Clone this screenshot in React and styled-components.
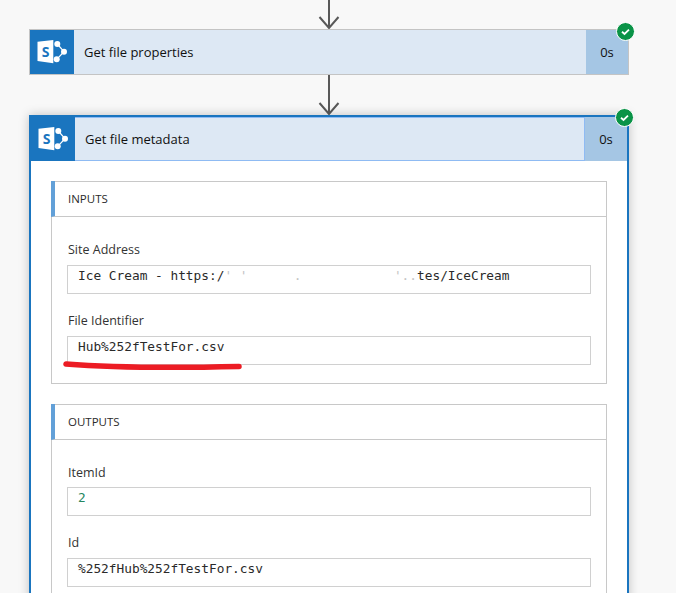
import React from "react";
import styled, { createGlobalStyle } from "styled-components";

const Global = createGlobalStyle`
  html, body {
    margin: 0;
    padding: 0;
    background: #f8f8f8;
  }
`;

const Page = styled.div`
  width: 676px;
  height: 593px;
  overflow: hidden;
  padding-left: 29px;
  box-sizing: border-box;
  font-family: "Open Sans", "Noto Sans", "Liberation Sans", sans-serif;
  color: #222;
`;

const Flow = styled.div`
  width: 600px;
`;

const Connector = styled.div`
  height: ${(p) => p.$height}px;
  display: flex;
  justify-content: center;
  svg {
    display: block;
  }
`;

const Card = styled.div`
  position: relative;
  box-sizing: border-box;
  width: 600px;
  border: ${(p) => (p.$open ? "2px solid #1a75bf" : "1px solid #c4c4c4")};
  ${(p) => p.$open && "box-shadow: 0 0 10px rgba(0, 0, 0, 0.22);"}
  background: #fff;
`;

const Header = styled.div`
  display: flex;
  height: 44px;
`;

const IconTile = styled.div`
  width: 44px;
  background: #1a75bf;
  flex: none;
  svg {
    display: block;
  }
`;

const Title = styled.div`
  flex: 1;
  display: flex;
  align-items: center;
  padding-left: 10px;
  background: #dde8f4;
  font-size: 13px;
  color: #111;
  box-sizing: border-box;
  ${(p) => p.$open && "border: solid #8fbbf3; border-width: 1px 1px 1px 0;"}
`;

const Duration = styled.div`
  width: 42px;
  flex: none;
  display: flex;
  align-items: center;
  justify-content: center;
  background: #a5c6e4;
  font-size: 13px;
  color: #111;
`;

const Badge = styled.div`
  position: absolute;
  top: ${(p) => p.$top}px;
  right: ${(p) => p.$right}px;
  width: 19px;
  height: 19px;
  svg {
    display: block;
  }
`;

const Body = styled.div`
  padding: 20px 20px 0;
  display: flex;
  flex-direction: column;
  gap: 20px;
`;

const Section = styled.section`
  border: 1px solid #c8c8c8;
  background: #fff;
`;

const SectionTitle = styled.div`
  height: 35px;
  display: flex;
  align-items: center;
  padding-left: 13px;
  border-left: 4px solid #62a0d8;
  margin-left: -1px;
  margin-top: -1px;
  border-bottom: 1px solid #c8c8c8;
  font-size: 11.5px;
  color: #2b2b2b;
`;

const SectionBody = styled.div`
  padding: 24px 15px 18px;
  display: flex;
  flex-direction: column;
  gap: 18px;
`;

const Field = styled.div`
  display: flex;
  flex-direction: column;
  gap: ${(p) => (p.$tight ? 7 : 8)}px;
`;

const Label = styled.div`
  font-size: 12.5px;
  line-height: 16px;
  padding: 1px 0 0 1px;
  margin-bottom: -1px;
  color: #333;
`;

const Value = styled.div`
  position: relative;
  box-sizing: border-box;
  height: 29px;
  border: 1px solid #d0d0d0;
  padding: 2px 10px 0;
  font-family: "DejaVu Sans Mono", "Liberation Mono", monospace;
  font-size: 12.8px;
  line-height: 15px;
  color: ${(p) => (p.$number ? "#25875f" : "#2a2a2a")};
  white-space: pre;
  background: #fff;
`;

const Residue = styled.span`
  color: #c4c4c4;
`;

const Scribble = styled.svg`
  position: absolute;
  left: -4px;
  top: 24px;
  overflow: visible;
`;

function SharePointIcon() {
  return (
    <svg width="44" height="44" viewBox="0 0 44 44">
      <path
        d="M27.3 14 L34 21.7 L26.7 29.3"
        fill="none"
        stroke="#fff"
        strokeWidth="1.2"
      />
      <circle cx="27.3" cy="14" r="3" fill="#fff" />
      <circle cx="34" cy="21.7" r="3" fill="#fff" />
      <circle cx="26.7" cy="29.3" r="3" fill="#fff" />
      <polygon points="7.5,11.7 23.3,10 23.3,33.3 7.5,31" fill="#fff" />
      <text
        x="15.5"
        y="27"
        fontSize="14"
        fontWeight="700"
        textAnchor="middle"
        fontFamily="Open Sans, sans-serif"
        fill="#1a75bf"
      >
        S
      </text>
    </svg>
  );
}

function CheckBadge() {
  return (
    <svg width="19" height="19" viewBox="0 0 19 19">
      <circle cx="9.5" cy="9.5" r="9" fill="#0a9347" stroke="#fff" strokeWidth="1" />
      <path
        d="M6 9.8 L8.5 12 L13 7.6"
        fill="none"
        stroke="#fff"
        strokeWidth="1.8"
      />
    </svg>
  );
}

function Arrow({ height }) {
  return (
    <Connector $height={height}>
      <svg width="24" height={height} viewBox={`0 0 24 ${height}`}>
        <path
          d={`M12 0 V${height - 1} M2.5 ${height - 12} L12 ${height - 1} L21.5 ${height - 12}`}
          fill="none"
          stroke="#595959"
          strokeWidth="2"
        />
      </svg>
    </Connector>
  );
}

export default function App() {
  return (
    <Page>
      <Global />
      <Flow>
        <Arrow height={29} />
        <Card>
          <Header>
            <IconTile>
              <SharePointIcon />
            </IconTile>
            <Title>Get file properties</Title>
            <Duration>0s</Duration>
          </Header>
          <Badge $top={-8} $right={-7}>
            <CheckBadge />
          </Badge>
        </Card>
        <Arrow height={40} />
        <Card $open>
          <Header>
            <IconTile>
              <SharePointIcon />
            </IconTile>
            <Title $open>Get file metadata</Title>
            <Duration>0s</Duration>
          </Header>
          <Badge $top={-9} $right={-7}>
            <CheckBadge />
          </Badge>
          <Body>
            <Section>
              <SectionTitle>INPUTS</SectionTitle>
              <SectionBody>
                <Field>
                  <Label>Site Address</Label>
                  <Value>
                    Ice Cream - https:/
                    <Residue>{"' '      .            '.."}</Residue>
                    tes/IceCream
                  </Value>
                </Field>
                <Field>
                  <Label>File Identifier</Label>
                  <Value>
                    Hub%252fTestFor.csv
                    <Scribble width="180" height="8" viewBox="0 0 180 8">
                      <path
                        d="M2 3 C40 6 110 7 175 5.5"
                        fill="none"
                        stroke="#ec1c24"
                        strokeWidth="5.5"
                        strokeLinecap="round"
                      />
                    </Scribble>
                  </Value>
                </Field>
              </SectionBody>
            </Section>
            <Section>
              <SectionTitle>OUTPUTS</SectionTitle>
              <SectionBody>
                <Field $tight>
                  <Label>ItemId</Label>
                  <Value $number>2</Value>
                </Field>
                <Field>
                  <Label>Id</Label>
                  <Value>%252fHub%252fTestFor.csv</Value>
                </Field>
              </SectionBody>
            </Section>
          </Body>
        </Card>
      </Flow>
    </Page>
  );
}
